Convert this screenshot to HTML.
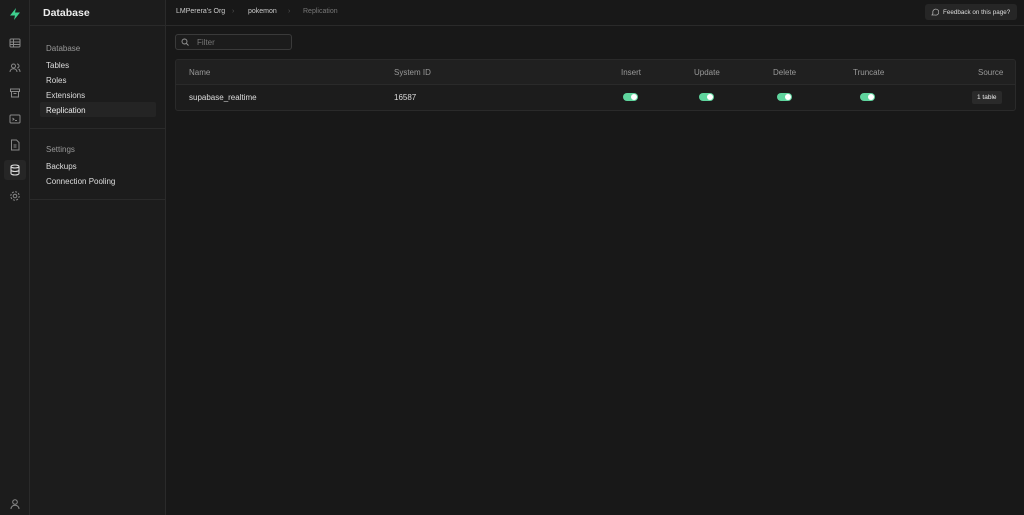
<!DOCTYPE html>
<html><head><style>
*{box-sizing:border-box;margin:0;padding:0}
body{width:1024px;height:515px;background:#181818;font-family:"Liberation Sans",sans-serif;color:#ededed;position:relative;overflow:hidden;font-size:8px}
.rail{position:absolute;left:0;top:0;width:30px;height:515px;background:#1c1c1c;border-right:1px solid #2a2a2a}
.side{position:absolute;left:30px;top:0;width:136px;height:515px;background:#1c1c1c;border-right:1px solid #2a2a2a}
.abs{position:absolute}
.ic{position:absolute;left:8px;width:14px;height:14px}
.hdr{position:absolute;left:166px;top:0;right:0;height:26px;border-bottom:1px solid #2a2a2a}
.t{position:absolute;white-space:nowrap}
.tog{position:absolute;width:15px;height:8px;border-radius:4px;background:#5fd49d}
.tog:after{content:"";position:absolute;right:1px;top:1px;width:6px;height:6px;border-radius:3px;background:#fff}
</style></head><body>
<div class="rail">
<svg class="abs" style="left:8px;top:7px" width="14" height="14" viewBox="0 0 14 14"><path d="M8 1 L2 8.5 H7 L6 13 L12 5.5 H7 Z" fill="#3ecf8e"/></svg>
<svg class="ic" style="top:36px" viewBox="0 0 14 14" fill="none" stroke="#888" stroke-width="1"><rect x="2" y="3" width="10" height="8" rx="1"/><path d="M2 6h10M2 8.5h10M5.5 3v8"/></svg>
<svg class="ic" style="top:61px" viewBox="0 0 14 14" fill="none" stroke="#888" stroke-width="1"><circle cx="5.5" cy="5" r="2"/><path d="M2 11c0-2 1.5-3.3 3.5-3.3S9 9 9 11M9 3a2 2 0 010 4M10.5 8c1 .5 1.5 1.5 1.5 3"/></svg>
<svg class="ic" style="top:86px" viewBox="0 0 14 14" fill="none" stroke="#888" stroke-width="1"><rect x="2.5" y="3" width="9" height="2.5"/><path d="M3.5 5.5v5.5h7V5.5M5.5 7.5h3"/></svg>
<svg class="ic" style="top:112px" viewBox="0 0 14 14" fill="none" stroke="#888" stroke-width="1"><rect x="2" y="3" width="10" height="8" rx="1"/><path d="M4.5 6l1.5 1.2-1.5 1.2M7 8.5h2"/></svg>
<svg class="ic" style="top:138px" viewBox="0 0 14 14" fill="none" stroke="#888" stroke-width="1"><path d="M3.5 2h5l2.5 2.5V12h-7.5z M5.5 7h3M5.5 9h3"/></svg>
<div class="abs" style="left:4px;top:160px;width:22px;height:20px;background:#262626;border-radius:3px"></div>
<svg class="ic" style="top:163px" viewBox="0 0 14 14" fill="none" stroke="#ddd" stroke-width="1.1"><ellipse cx="7" cy="3.5" rx="4" ry="1.5"/><path d="M3 3.5v7c0 .8 1.8 1.5 4 1.5s4-.7 4-1.5v-7M3 7c0 .8 1.8 1.5 4 1.5s4-.7 4-1.5"/></svg>
<svg class="ic" style="top:189px" viewBox="0 0 14 14" fill="none" stroke="#888" stroke-width="1"><circle cx="7" cy="7" r="1.8"/><circle cx="7" cy="7" r="4.2" stroke-dasharray="2 1.3"/></svg>
<svg class="ic" style="top:497px" viewBox="0 0 14 14" fill="none" stroke="#888" stroke-width="1"><circle cx="7" cy="5" r="2.3"/><path d="M3 12c0-2.3 1.8-3.8 4-3.8s4 1.5 4 3.8"/></svg>
</div>
<div class="side">
<div class="t" style="left:13px;top:7px;font-size:10.5px;color:#ededed;font-weight:bold">Database</div>
<div class="abs" style="left:0;right:0;top:25px;border-top:1px solid #2a2a2a"></div>
<div class="t" style="left:16px;top:44px;color:#999">Database</div>
<div class="t" style="left:16px;top:61px;color:#ddd">Tables</div>
<div class="t" style="left:16px;top:76px;color:#ddd">Roles</div>
<div class="t" style="left:16px;top:91px;color:#ddd">Extensions</div>
<div class="abs" style="left:10px;top:102px;width:116px;height:15px;background:#242424;border-radius:2px"></div>
<div class="t" style="left:16px;top:106px;color:#ededed">Replication</div>
<div class="abs" style="left:0;right:0;top:128px;border-top:1px solid #2a2a2a"></div>
<div class="t" style="left:16px;top:145px;color:#999">Settings</div>
<div class="t" style="left:16px;top:162px;color:#ddd">Backups</div>
<div class="t" style="left:16px;top:177px;color:#ddd">Connection Pooling</div>
<div class="abs" style="left:0;right:0;top:199px;border-top:1px solid #2a2a2a"></div>
</div>
<div class="hdr">
<div class="t" style="left:10px;top:8px;font-size:7px;color:#ccc">LMPerera's Org</div>
<div class="t" style="left:66px;top:8px;font-size:7px;color:#555">›</div>
<div class="t" style="left:82px;top:8px;font-size:7px;color:#ccc">pokemon</div>
<div class="t" style="left:122px;top:8px;font-size:7px;color:#555">›</div>
<div class="t" style="left:137px;top:8px;font-size:7px;color:#777">Replication</div>
<div class="abs" style="left:759px;top:4px;width:92px;height:16px;background:#262626;border-radius:3px"></div>
<svg class="abs" style="left:765px;top:8px" width="8" height="8" viewBox="0 0 8 8" fill="none" stroke="#aaa" stroke-width=".8"><path d="M1 7l1-1.8A3 3 0 114 7z"/></svg>
<div class="t" style="left:777px;top:8.5px;font-size:6.3px;color:#ddd">Feedback on this page?</div>
</div>
<div class="abs" style="left:175px;top:34px;width:117px;height:16px;border:1px solid #3a3a3a;border-radius:3px;background:#1c1c1c"></div>
<svg class="abs" style="left:181px;top:38px" width="8" height="8" viewBox="0 0 8 8" fill="none" stroke="#999" stroke-width=".9"><circle cx="3.5" cy="3.5" r="2.5"/><path d="M5.5 5.5L7.5 7.5"/></svg>
<div class="t" style="left:197px;top:38px;color:#777">Filter</div>
<div class="abs" style="left:175px;top:59px;width:841px;height:52px;border:1px solid #2a2a2a;border-radius:3px;overflow:hidden;background:#1c1c1c">
<div class="abs" style="left:0;top:0;right:0;height:25px;background:#202020;border-bottom:1px solid #2a2a2a"></div>
</div>
<div class="t" style="left:189px;top:68px;color:#999">Name</div>
<div class="t" style="left:394px;top:68px;color:#999">System ID</div>
<div class="t" style="left:621px;top:68px;color:#999">Insert</div>
<div class="t" style="left:694px;top:68px;color:#999">Update</div>
<div class="t" style="left:773px;top:68px;color:#999">Delete</div>
<div class="t" style="left:853px;top:68px;color:#999">Truncate</div>
<div class="t" style="left:978px;top:68px;color:#999">Source</div>
<div class="t" style="left:189px;top:93px;color:#ddd">supabase_realtime</div>
<div class="t" style="left:394px;top:93px;color:#ddd">16587</div>
<div class="tog" style="left:623px;top:93px"></div>
<div class="tog" style="left:699px;top:93px"></div>
<div class="tog" style="left:777px;top:93px"></div>
<div class="tog" style="left:860px;top:93px"></div>
<div class="abs" style="left:972px;top:91px;width:30px;height:13px;background:#2a2a2a;border-radius:2px"></div>
<div class="t" style="left:977px;top:94px;font-size:6.5px;color:#eee">1 table</div>
</body></html>
